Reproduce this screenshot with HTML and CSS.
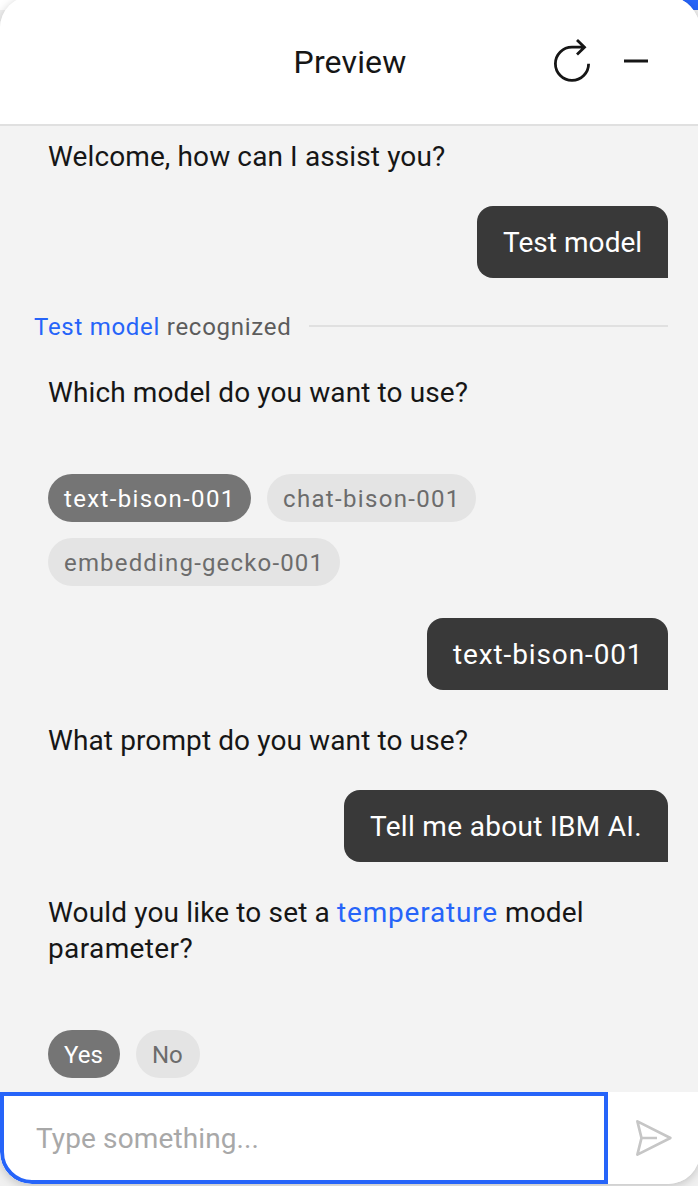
FILE: index.html
```html
<!DOCTYPE html>
<html lang="en">
<head>
<meta charset="utf-8">
<title>Preview</title>
<link rel="stylesheet" href="styles.css">
</head>
<body>
<main class="panel">
  <header class="header">
    <h1 class="title">Preview</h1>
    <div class="actions">
      <button class="icon-button" aria-label="Restart">
        <svg width="40" height="44" viewBox="0 0 40 44" fill="none" stroke="#161616" stroke-width="2.8"><path d="M36.6 23.7A16.6 16.6 0 1 1 20 7.1H33M25 0l7.5 7.2L25 14.6"/></svg>
      </button>
      <button class="icon-button" aria-label="Minimize">
        <svg width="24" height="44" viewBox="0 0 24 44"><path d="M0 19.4h24v3.2H0z" fill="#161616"/></svg>
      </button>
    </div>
  </header>
  <section class="chat">
    <p class="message"><span class="welcome">Welcome, how can I assist you?</span></p>
    <p class="bubble bubble-test">Test model</p>
    <div class="recognized"><span class="label"><a class="link">Test model</a> recognized</span><i class="rule"></i></div>
    <p class="message"><span class="which">Which model do you want to use?</span></p>
    <div class="chips">
      <button class="chip selected chip-text">text-bison-001</button>
      <button class="chip chip-chat">chat-bison-001</button>
      <button class="chip chip-embed">embedding-gecko-001</button>
    </div>
    <p class="bubble bubble-bison">text-bison-001</p>
    <p class="message"><span class="what">What prompt do you want to use?</span></p>
    <p class="bubble bubble-tell">Tell me about IBM AI.</p>
    <p class="message"><span class="would">Would you like to set a <a class="link term">temperature</a> model</span><br><span class="param">parameter?</span></p>
    <div class="chips">
      <button class="chip selected chip-yes">Yes</button>
      <button class="chip chip-no">No</button>
    </div>
  </section>
  <footer class="composer">
    <div class="field"><span class="placeholder">Type something...</span></div>
    <button class="send" aria-label="Send">
      <svg width="38" height="38" viewBox="0 0 38 38" fill="none" stroke="#c6c6c6" stroke-width="2.7" stroke-linejoin="round"><path d="M2.4 2.4L35.4 19L2.4 35.6L6.5 19zM6.5 19H22"/></svg>
    </button>
  </footer>
</main>
</body>
</html>
```
FILE: styles.css
```css
* { box-sizing: border-box; }
body {
  margin: 0;
  width: 698px;
  height: 1186px;
  overflow: hidden;
  background: linear-gradient(90deg, #fff 50%, #2664f9 50%) 0 0 / 100% 10px no-repeat, #f0f0f0;
  font-family: Roboto, "Liberation Sans", sans-serif;
  color: #161616;
}
h1, p { margin: 0; font-weight: 400; }
button { border: 0; padding: 0; background: none; font: inherit; }
svg { display: block; overflow: visible; }
.panel {
  display: flex;
  flex-direction: column;
  width: 700px;
  height: 1188px;
  margin-top: -4px;
  border-radius: 32px 34px 32px 32px;
  overflow: hidden;
  background: #f3f3f3;
  box-shadow: 0 2px 10px rgba(0, 0, 0, .2);
}
.header {
  display: grid;
  grid-template-columns: 1fr auto 1fr;
  align-items: center;
  height: 130px;
  padding-top: 4px;
  background: #fff;
  border-bottom: 2px solid #e0e0e0;
}
.title { grid-column: 2; font-size: 32px; line-height: 40px; letter-spacing: .15px; }
.actions { display: flex; justify-content: flex-end; gap: 32px; padding-right: 52px; }
.chat { flex: 1; display: flex; flex-direction: column; gap: 32px; padding: 12px 32px 14px 48px; }
.message { padding-top: 1px; margin-bottom: -1px; font-size: 28px; line-height: 36px; letter-spacing: .11px; white-space: nowrap; }
.would { letter-spacing: .15px; }
.term { letter-spacing: .8px; }
.param { letter-spacing: .38px; }
.bubble {
  align-self: flex-end;
  padding: 19px 0 17px 26px;
  border-radius: 16px 16px 0 16px;
  background: #393939;
  color: #fff;
  font-size: 28px;
  line-height: 36px;
  white-space: nowrap;
}
.bubble-test { width: 191px; letter-spacing: .05px; }
.bubble-bison { width: 241px; letter-spacing: .88px; }
.bubble-tell { width: 324px; letter-spacing: .32px; }
.link { color: #2664f9; }
.recognized { display: flex; align-items: center; height: 32px; margin-left: -14px; font-size: 24px; line-height: 32px; color: #5c5c5c; }
.label { width: 275px; padding-top: 2px; letter-spacing: .72px; white-space: nowrap; }
.rule { flex: 1; height: 2px; background: #e0e0e0; }
.chips { display: flex; flex-wrap: wrap; gap: 16px; padding-top: 32px; }
.chip { height: 48px; padding: 2px 0 0 16px; border-radius: 24px; background: #e4e4e4; color: #6c6c6c; font-size: 24px; text-align: left; white-space: nowrap; }
.selected { background: #757575; color: #fff; }
.chip-text { width: 203px; letter-spacing: 1.35px; }
.chip-chat { width: 209px; letter-spacing: 1.33px; }
.chip-embed { width: 292px; letter-spacing: 1.17px; }
.chip-yes { width: 72px; }
.chip-no { width: 64px; }
.composer { display: flex; height: 92px; background: #fff; }
.field { display: flex; align-items: center; width: 608px; padding-left: 32px; border: 4px solid #2664f9; border-bottom-left-radius: 32px; }
.placeholder { color: #a8a8a8; font-size: 28px; letter-spacing: .12px; }
.send { padding-left: 27px; }
```
